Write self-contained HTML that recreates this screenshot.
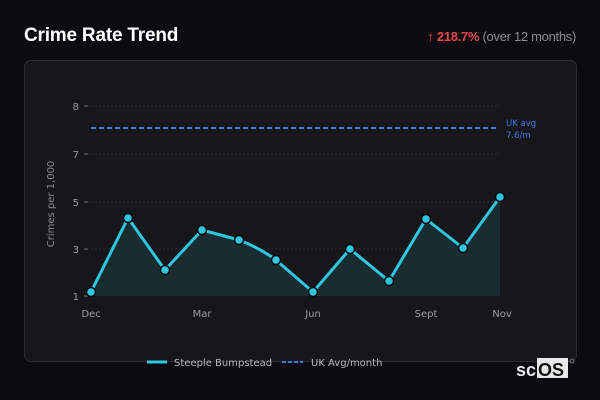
<!DOCTYPE html>
<html><head><meta charset="utf-8"><style>
body{margin:0;width:600px;height:400px;background:#0c0c10;font-family:"Liberation Sans",sans-serif;overflow:hidden;position:relative}
.t{position:absolute;left:24px;top:25px;color:#fff;font-weight:bold;font-size:19px;letter-spacing:-0.2px}
.r{position:absolute;right:24px;top:29px;font-size:13px;color:#8a8a92;letter-spacing:-0.3px}
.r b{color:#e5484d}
.card{position:absolute;left:24px;top:60px;width:551px;height:300px;background:#17171b;border:1px solid #2c2c32;border-radius:7px}
</style></head><body>
<div class="t">Crime Rate Trend</div>
<div class="r"><b>↑ 218.7%</b> (over 12 months)</div>
<div class="card"></div>
<svg width="600" height="400" style="position:absolute;left:0;top:0" font-family="DejaVu Sans, Liberation Sans, sans-serif">
<g stroke="#2a2a30" stroke-dasharray="2 2" stroke-width="1">
<line x1="91" y1="106" x2="500" y2="106"/><line x1="91" y1="154" x2="500" y2="154"/><line x1="91" y1="202" x2="500" y2="202"/><line x1="91" y1="249" x2="500" y2="249"/>
</g>
<g fill="#9a9aa2" font-size="10" text-anchor="end">
<text x="79" y="110">8</text><text x="79" y="158">7</text><text x="79" y="206">5</text><text x="79" y="253">3</text><text x="79" y="300">1</text>
</g>
<g stroke="#777" stroke-width="1"><line x1="84" y1="106" x2="88" y2="106"/><line x1="84" y1="154" x2="88" y2="154"/><line x1="84" y1="202" x2="88" y2="202"/><line x1="84" y1="249" x2="88" y2="249"/><line x1="84" y1="296" x2="88" y2="296"/></g>
<text transform="translate(54,204) rotate(-90)" fill="#8a8a92" font-size="10" text-anchor="middle">Crimes per 1,000</text>
<g fill="#9a9aa2" font-size="10" text-anchor="middle">
<text x="91" y="317">Dec</text><text x="202" y="317">Mar</text><text x="313" y="317">Jun</text><text x="426" y="317">Sept</text><text x="502" y="317">Nov</text>
</g>
<line x1="91" y1="128" x2="498" y2="128" stroke="#3b7ae0" stroke-width="2" stroke-dasharray="5 3"/>
<text x="506" y="126" fill="#3b7ae0" font-size="8.5">UK avg</text>
<text x="506" y="138" fill="#3b7ae0" font-size="8.5">7.6/m</text>
<path d="M91,292 L128,218 L165,270 L202,230 L239,240 Q260,248 276,260 L313,292 L350,249 L389,281 L426,219 L463,248 L500,197 L500,296 L91,296Z" fill="#1a2f35" opacity="0.9"/>
<path d="M91,292 L128,218 L165,270 L202,230 L239,240 Q260,248 276,260 L313,292 L350,249 L389,281 L426,219 L463,248 L500,197" fill="none" stroke="#2fc6e0" stroke-width="3" stroke-linejoin="round"/>
<g fill="#2fc6e0" stroke="#0c0c10" stroke-width="1.5">
<circle cx="91" cy="292" r="4.5"/><circle cx="128" cy="218" r="4.5"/><circle cx="165" cy="270" r="4.5"/><circle cx="202" cy="230" r="4.5"/><circle cx="239" cy="240" r="4.5"/><circle cx="276" cy="260" r="4.5"/><circle cx="313" cy="292" r="4.5"/><circle cx="350" cy="249" r="4.5"/><circle cx="389" cy="281" r="4.5"/><circle cx="426" cy="219" r="4.5"/><circle cx="463" cy="248" r="4.5"/><circle cx="500" cy="197" r="4.5"/>
</g>
<line x1="147" y1="362" x2="167" y2="362" stroke="#2fc6e0" stroke-width="3"/>
<text x="174" y="366" fill="#b8b8c0" font-size="10">Steeple Bumpstead</text>
<line x1="282" y1="362" x2="303" y2="362" stroke="#3b7ae0" stroke-width="2" stroke-dasharray="4 2"/>
<text x="311" y="366" fill="#b8b8c0" font-size="10">UK Avg/month</text>
<text x="516" y="376" fill="#e8e8e8" font-size="18" font-weight="bold" font-family="Liberation Sans, sans-serif">sc</text>
<rect x="537" y="358" width="31" height="20" fill="#e8e8e8"/>
<text x="538" y="376" fill="#111" font-size="18" font-weight="bold" font-family="Liberation Sans, sans-serif">OS</text>
<circle cx="572" cy="361" r="2" fill="none" stroke="#888" stroke-width="0.8"/>
</svg>
</body></html>
